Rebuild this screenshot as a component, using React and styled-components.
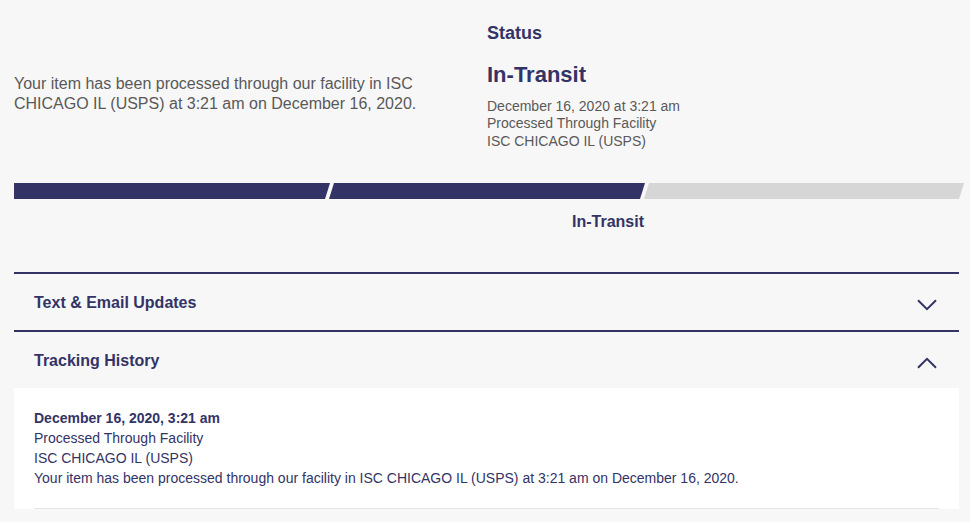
import React from "react";
import styled, { createGlobalStyle } from "styled-components";

const NAVY = "#333366";
const GREY = "#595959";

const Global = createGlobalStyle`
  html, body { margin: 0; padding: 0; }
  body {
    background: #f7f7f7;
    font-family: "Liberation Sans", Arial, Helvetica, sans-serif;
    -webkit-font-smoothing: antialiased;
  }
`;

const Page = styled.div`
  padding: 0 11px 0 14px;
`;

const Top = styled.section`
  display: grid;
  grid-template-columns: 473px 1fr;
`;

const Summary = styled.p`
  align-self: center;
  margin: 4px 0 0;
  max-width: 440px;
  font-size: 16px;
  line-height: 20px;
  color: ${GREY};
`;

const StatusCol = styled.div`
  padding: 22px 0 33px;
`;

const StatusLabel = styled.h3`
  margin: 0;
  font-size: 18px;
  line-height: 22px;
  font-weight: 700;
  color: ${NAVY};
`;

const StatusValue = styled.h2`
  margin: 17.5px 0 0;
  font-size: 22px;
  line-height: 26px;
  font-weight: 700;
  color: ${NAVY};
`;

const StatusDetails = styled.div`
  margin-top: 10px;
  font-size: 14px;
  line-height: 17.5px;
  color: ${GREY};
`;

const Bar = styled.div`
  display: flex;
  height: 16px;
  margin-right: -5px;
`;

const Segment = styled.div`
  flex: ${(p) => (p.$last ? "1 1 auto" : "0 0 316px")};
  margin-left: ${(p) => (p.$first ? "0" : "-1px")};
  background: ${(p) => (p.$done ? NAVY : "#d6d6d6")};
  clip-path: ${(p) =>
    p.$first
      ? "polygon(0 0, 100% 0, calc(100% - 5px) 100%, 0 100%)"
      : "polygon(5px 0, 100% 0, calc(100% - 5px) 100%, 0 100%)"};
`;

const BarLabel = styled.div`
  width: 630px;
  margin-top: 13px;
  text-align: right;
  font-size: 16px;
  line-height: 20px;
  font-weight: 700;
  color: ${NAVY};
`;

const Accordion = styled.div`
  margin-top: 40px;
`;

const Header = styled.div`
  display: flex;
  align-items: center;
  justify-content: space-between;
  height: 58px;
  box-sizing: border-box;
  padding: 2px 22px 0 20px;
  border-top: 2px solid ${NAVY};
  font-size: 16px;
  line-height: 20px;
  font-weight: 700;
  color: ${NAVY};
`;

const Chevron = styled.svg`
  display: block;
  margin-top: 3px;
  width: 20px;
  height: 12px;
  transform: ${(p) => (p.$up ? "rotate(180deg)" : "none")};
`;

const Panel = styled.div`
  background: #ffffff;
  padding: 0 20px;
`;

const Event = styled.div`
  padding: 20px 0 20px;
  border-bottom: 1px solid #e6e6e6;
  font-size: 14px;
  line-height: 20px;
  color: ${NAVY};
`;

const EventDate = styled.div`
  font-weight: 700;
`;

const Icon = ({ up }) => (
  <Chevron $up={up} viewBox="0 0 20 12" fill="none">
    <path d="M1 1.2 L10 10.2 L19 1.2" stroke={NAVY} strokeWidth="2" />
  </Chevron>
);

export default function App() {
  return (
    <>
      <Global />
      <Page>
        <Top>
          <Summary>
            Your item has been processed through our facility in ISC CHICAGO IL
            (USPS) at 3:21 am on December 16, 2020.
          </Summary>
          <StatusCol>
            <StatusLabel>Status</StatusLabel>
            <StatusValue>In-Transit</StatusValue>
            <StatusDetails>
              <div>December 16, 2020 at 3:21 am</div>
              <div>Processed Through Facility</div>
              <div>ISC CHICAGO IL (USPS)</div>
            </StatusDetails>
          </StatusCol>
        </Top>
        <Bar>
          <Segment $first $done />
          <Segment $done />
          <Segment $last />
        </Bar>
        <BarLabel>In-Transit</BarLabel>
        <Accordion>
          <Header>
            <span>Text &amp; Email Updates</span>
            <Icon />
          </Header>
          <Header>
            <span>Tracking History</span>
            <Icon up />
          </Header>
          <Panel>
            <Event>
              <EventDate>December 16, 2020, 3:21 am</EventDate>
              <div>Processed Through Facility</div>
              <div>ISC CHICAGO IL (USPS)</div>
              <div>
                Your item has been processed through our facility in ISC
                CHICAGO IL (USPS) at 3:21 am on December 16, 2020.
              </div>
            </Event>
          </Panel>
        </Accordion>
      </Page>
    </>
  );
}
